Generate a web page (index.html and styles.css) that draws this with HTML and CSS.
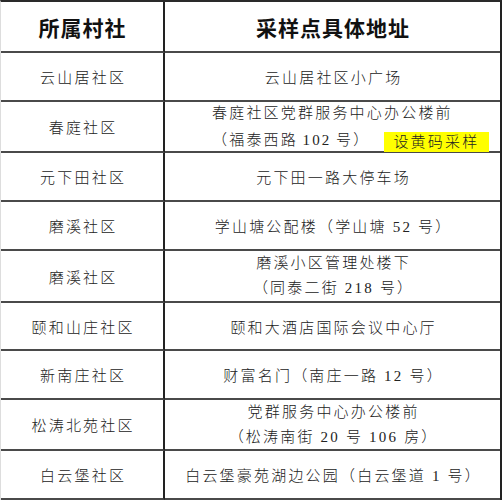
FILE: index.html
```html
<!DOCTYPE html>
<html lang="zh-CN">
<head>
<meta charset="utf-8">
<title>采样点</title>
<link rel="stylesheet" href="styles.css">
</head>
<body>
<div class="sheet">
  <div class="cell name head">所属村社</div>
  <div class="cell addr head">采样点具体地址</div>

  <div class="cell name">云山居社区</div>
  <div class="cell addr">云山居社区小广场</div>

  <div class="cell name">春庭社区</div>
  <div class="cell addr start">
    <div class="multi left">
      <div class="line">春庭社区党群服务中心办公楼前</div>
      <div class="line second"><span class="tight">（福泰西路 102 号）</span><span class="mark">设黄码采样</span></div>
    </div>
  </div>

  <div class="cell name">元下田社区</div>
  <div class="cell addr">元下田一路大停车场</div>

  <div class="cell name">磨溪社区</div>
  <div class="cell addr">学山塘公配楼（学山塘 52 号）</div>

  <div class="cell name">磨溪社区</div>
  <div class="cell addr">
    <div class="multi">
      <div class="line">磨溪小区管理处楼下</div>
      <div class="line">（同泰二街 218 号）</div>
    </div>
  </div>

  <div class="cell name">颐和山庄社区</div>
  <div class="cell addr">颐和大酒店国际会议中心厅</div>

  <div class="cell name">新南庄社区</div>
  <div class="cell addr">财富名门（南庄一路 12 号）</div>

  <div class="cell name">松涛北苑社区</div>
  <div class="cell addr">
    <div class="multi">
      <div class="line">党群服务中心办公楼前</div>
      <div class="line">（松涛南街 20 号 106 房）</div>
    </div>
  </div>

  <div class="cell name">白云堡社区</div>
  <div class="cell addr">白云堡豪苑湖边公园（白云堡道 1 号）</div>
</div>
</body>
</html>
```

FILE: styles.css
```css
html, body {
  margin: 0;
  padding: 0;
  background: #ffffff;
}

body {
  font-family: "Liberation Serif", "Noto Sans CJK SC", serif;
  color: #222222;
}

.sheet {
  display: grid;
  grid-template-columns: 164px 335px;
  grid-template-rows: 51px 49px 51px 49px 49px 52px 48px 49px 51px 49px;
  width: max-content;
  border-top: 2px solid #2a2a2a;
  border-left: 1px solid #dddddd;
  border-right: 2px solid #222222;
}

.cell {
  display: flex;
  align-items: center;
  justify-content: center;
  text-align: center;
  border-bottom: 2px solid #4a4a4a;
  font-size: 15px;
  font-weight: 300;
  letter-spacing: 2.2px;
  padding-left: 2.2px;
  white-space: nowrap;
  overflow: visible;
}

.cell.start {
  justify-content: flex-start;
  padding-left: 47px;
}

.name {
  border-right: 2px solid #222222;
}

.head {
  font-family: "Noto Sans CJK SC", sans-serif;
  font-size: 21px;
  font-weight: 700;
  letter-spacing: 1px;
  padding-left: 1px;
  color: #111111;
}

.multi {
  display: flex;
  flex-direction: column;
  align-items: center;
  line-height: 25px;
}

.multi.left {
  align-items: flex-start;
}

.line {
  display: flex;
  align-items: center;
}

.second {
  margin-top: 2px;
}

.tight {
  word-spacing: -1.5px;
}

.mark {
  display: inline-block;
  margin-left: 14px;
  margin-top: 4px;
  height: 20px;
  line-height: 20px;
  padding: 0 10px 0 9px;
  background: #ffff00;
}
```
